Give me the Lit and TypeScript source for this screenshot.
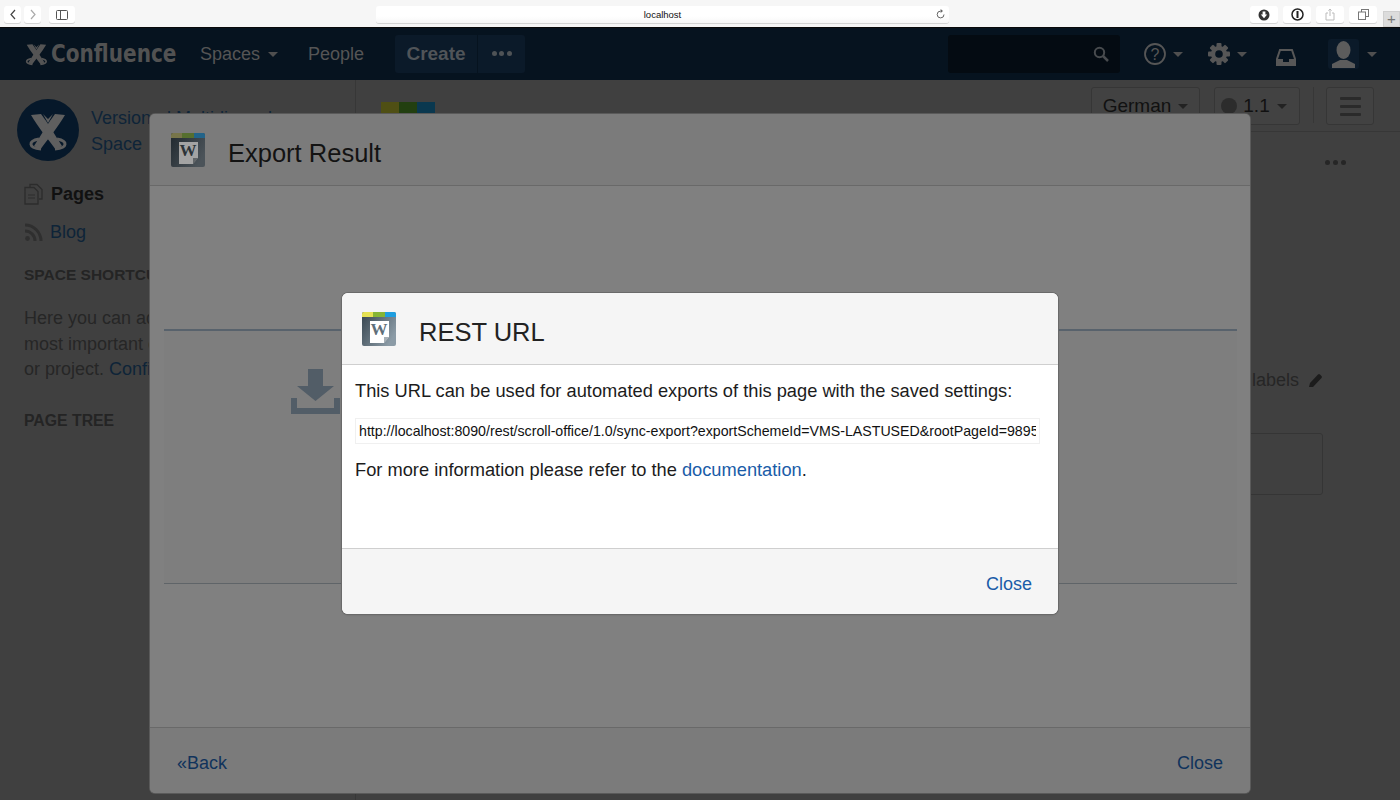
import { LitElement, html, css, svg } from "lit";
import { customElement } from "lit/decorators.js";

const appIcon = (shade: number) => {
  const c = shade === 0
    ? { y: "#e6e253", g: "#86b535", b: "#1e9ee0", t: "#35434d", u: "#8b9ba6", p: "#ffffff", w: "#5f6f7a", id: "a" }
    : { y: "#77754a", g: "#566f2f", b: "#22648a", t: "#20282e", u: "#4b5359", p: "#a3a3a3", w: "#2c3338", id: "b" };
  return html`<svg class="appicon" viewBox="0 0 34 34" width="34" height="34">
    <defs><linearGradient id="g${c.id}" x1="0" y1="0" x2="1" y2="0.6"><stop offset="0" stop-color=${c.t}/><stop offset="1" stop-color=${c.u}/></linearGradient></defs>
    <rect x="0" y="0" width="34" height="34" rx="2" fill="url(#g${c.id})"/>
    <path d="M0 5V2a2 2 0 0 1 2-2h10v5z" fill=${c.y}/><rect x="11" width="12" height="5" fill=${c.g}/>
    <path d="M23 0h9a2 2 0 0 1 2 2v3H23z" fill=${c.b}/>
    <path d="M8 9h19v16l-5 6H8z" fill=${c.p}/>
    <path d="M22 31v-6h5z" fill=${c.w} opacity=".55"/>
    <text x="17" y="23" text-anchor="middle" font-family="Liberation Serif, serif" font-size="17" font-weight="700" fill=${c.w}>W</text>
  </svg>`;
};

const crossed = (fill: string) => svg`
  <path d="M14 16l10-1c7 9 14 21 21 32l-6 4C31 40 21 28 14 16z" fill=${fill}/>
  <path d="M48 16l-10-1c-7 9-14 21-21 32l6 4c8-11 18-23 25-35z" fill=${fill}/>
  <path d="M26 15l5 5 5-5-5 9z" fill=${fill}/>
  <path d="M22 40c-11 2-11 9 2 10M40 40c11 2 11 9-2 10" fill="none" stroke=${fill} stroke-width="3"/>
`;

@customElement("app-root")
export class AppRoot extends LitElement {
  static styles = css`
    :host { display: block; width: 1400px; height: 800px; overflow: hidden; font-family: "Liberation Sans", Arial, sans-serif; }
    * { box-sizing: border-box; }
    a { text-decoration: none; }
    .chrome { height: 28px; background: #f6f6f6; border-bottom: 1px solid #0a0a0a; display: flex; align-items: flex-start; padding: 6px 0 0 4px; position: relative; }
    .cbtn { height: 17px; background: #fff; border-radius: 3px; box-shadow: 0 1px 0 #d4d4d4; display: flex; align-items: center; justify-content: center; }
    .back { width: 17px; margin-right: 3px; }
    .fwd { width: 17px; }
    .side { width: 26px; margin-left: 8px; }
    .addr { width: 573px; margin-left: 301px; height: 17px; background: linear-gradient(#fff 60%, #f7f7f7); border-radius: 3px; box-shadow: 0 1px 0 #d4d4d4; font-size: 9.5px; color: #111; display: flex; align-items: center; justify-content: center; position: relative; }
    .reload { position: absolute; right: 3px; top: 3px; }
    .tools { display: flex; gap: 5px; margin-left: 301px; }
    .tools .cbtn { width: 28px; }
    .plus { position: absolute; right: 0; top: 11px; width: 17px; height: 16px; background: #dcdcdc; border: 1px solid #cfcfcf; color: #777; font-size: 15px; line-height: 14px; text-align: center; }

    .stage { position: relative; height: 772px; background: #404040; overflow: hidden; }
    .nav { height: 52px; background: #06131f; display: flex; align-items: center; color: #555; padding-left: 23px; font-size: 18px; }
    .brand { display: flex; align-items: center; width: 177px; }
    .brand svg { flex: none; }
    .brand span { display: block; font-family: "DejaVu Sans Condensed", "DejaVu Sans", sans-serif; font-stretch: condensed; font-weight: 700; font-size: 24px; color: #525252; transform: scaleX(0.93); transform-origin: left center; white-space: nowrap; }
    .item { display: flex; align-items: center; }
    .caret { width: 0; height: 0; border: 5px solid transparent; border-top: 5px solid #4f4f4f; border-bottom: 0; margin-left: 8px; }
    .spaces { width: 108px; }
    .people { width: 87px; }
    .create { display: flex; height: 38px; background: #0b1a29; border-radius: 3px; margin-top: -1px; }
    .create b { width: 83px; text-align: center; line-height: 38px; font-size: 19px; border-right: 1px solid #06131f; color: #505458; }
    .create i { width: 47px; display: flex; align-items: center; justify-content: center; gap: 2.5px; }
    .create i u { width: 5px; height: 5px; border-radius: 50%; background: #4f5356; display: block; }
    .search { margin-left: 423px; width: 172px; height: 38px; background: #040b12; border-radius: 3px; display: flex; align-items: center; justify-content: flex-end; padding-right: 11px; margin-top: -1px; }
    .nicons { display: flex; align-items: center; margin-left: 23px; }
    .nicons .caret { margin-left: 6px; }
    .gear { margin-left: 24px; }
    .tray { margin: 6px 0 0 28px; }
    .avatar { width: 31px; height: 30px; background: #0b1a29; border-radius: 3px; overflow: hidden; margin-left: 31px; }
    .nicons .last { margin-left: 8px; }

    .body { display: flex; height: 720px; }
    .sidebar { width: 356px; border-right: 1px solid #373737; padding: 19px 0 0 24px; flex: none; color: #262626; font-size: 18px; overflow: hidden; }
    .space { display: flex; align-items: flex-start; margin-left: -7px; height: 62px; white-space: nowrap; }
    .space svg { flex: none; }
    .space div { margin: 6px 0 0 12px; line-height: 26px; color: #0e2438; }
    .nl { display: flex; align-items: center; height: 38px; gap: 8px; }
    .first { margin-top: 14px; }
    .nl b { color: #111; }
    .nl a { color: #0e2438; margin-left: -1px; }
    h4 { margin: 0; font-size: 15.5px; color: #242424; line-height: 20px; white-space: nowrap; }
    .sc { margin-top: 14px; }
    .sidebar p { margin: 21px 0 0; line-height: 25.6px; white-space: nowrap; color: #262626; }
    .sidebar p a { color: #0e2438; }
    .pt { margin-top: 28px; font-size: 15.8px; }

    .main { flex: 1; position: relative; display: flex; flex-direction: column; padding: 0 26px 0 25px; }
    .toolbar { height: 52px; border-bottom: 1px solid #373737; margin: 0 -26px 0 -25px; padding: 7px 26px 0 25px; display: flex; align-items: flex-start; flex: none; }
    .mark { display: flex; margin-top: 15px; height: 12px; width: 54px; }
    .mark u { flex: 1; display: block; }
    .spacer { flex: 1; }
    .tb { height: 38px; border: 1px solid #363636; border-radius: 3px; display: flex; align-items: center; justify-content: center; color: #111; font-size: 19px; background: #424242; }
    .tb .caret { border-top-color: #222; margin-left: 7px; }
    .lang { width: 109px; }
    .ver { width: 86px; margin-left: 14px; padding-right: 6px; }
    .dot { width: 16px; height: 16px; border-radius: 50%; background: #2c2c2c; margin-right: 6px; }
    .sep { width: 1px; height: 36px; background: #373737; margin: 0 12px 0 13px; }
    .menu { width: 48px; flex-direction: column; gap: 5px; }
    .menu u { display: block; width: 21px; height: 3px; background: #2a2a2a; border-radius: 1px; }
    .dots { align-self: flex-end; display: flex; gap: 3px; margin: 28px 28px 0 0; }
    .dots u { width: 5px; height: 5px; border-radius: 50%; background: #262626; display: block; }
    .labels { align-self: flex-end; margin: 202px 51px 0 0; font-size: 18px; color: #262626; display: flex; align-items: center; gap: 9px; line-height: 26px; }
    .box { align-self: flex-end; width: 400px; height: 62px; border: 1px solid #353535; border-radius: 3px; margin: 40px 51px 0 0; }

    .dialog { position: absolute; display: flex; flex-direction: column; border-radius: 5px; overflow: hidden; }
    .d1 { left: 150px; top: 86px; width: 1100px; height: 679px; background: #808080; box-shadow: 0 0 0 1px #5a5a5a; }
    .d2 { left: 342px; top: 265px; width: 716px; height: 321px; background: #fff; box-shadow: 0 0 0 1px #6a6a6a, 0 1px 2px #666; border-radius: 6px; }
    .dh { display: flex; align-items: center; flex: none; }
    .appicon { margin-top: 1px; flex: none; }
    .d1 .dh { height: 72px; background: #7b7b7b; border-bottom: 1px solid #696969; padding: 0 0 0 21px; }
    .d2 .dh { height: 72px; background: #f5f5f5; border-bottom: 1px solid #cfcfcf; padding: 0 0 0 20px; }
    .dh h2 { margin: 8px 0 0 23px; font-weight: 400; font-size: 25.5px; }
    .d1 h2 { color: #131313; }
    .d2 h2 { color: #222; }
    .d1 .dc { flex: 1; padding: 143px 13px 0 14px; }
    .panel { height: 255px; border-top: 2px solid #58626c; border-bottom: 1px solid #5f6468; background: #7e7e7e; padding: 38px 0 0 127px; }
    .df { flex: none; display: flex; justify-content: space-between; align-items: center; }
    .d1 .df { height: 66px; background: #7b7b7b; border-top: 1px solid #696969; padding: 6px 27px 0; font-size: 18px; }
    .d1 .df a { color: #10335c; }
    .d2 .dc { flex: 1; padding: 14px 18px 0 13px; font-size: 18.28px; color: #1c1c1c; line-height: 24px; }
    .dc p { margin: 0; }
    .url { display: block; width: 685px; height: 26px; margin: 15px 0 14px; border: 1px solid #f0f0f0; padding: 0 3px; font-family: "Liberation Sans", Arial, sans-serif; font-size: 14.2px; color: #111; background: #fff; outline: none; }
    .dc a { color: #1a5ca8; }
    .d2 .df { height: 66px; background: #f5f5f5; border-top: 1px solid #cfcfcf; justify-content: flex-end; padding: 6px 26px 0 0; font-size: 18px; }
    .d2 .df a { color: #1a5ca8; }
  `;

  render() {
    return html`
      <div class="chrome">
        <div class="cbtn back"><svg width="8" height="11" viewBox="0 0 8 11"><path d="M6 1 2 5.500 6 10" fill="none" stroke="#444" stroke-width="1.2"/></svg></div>
        <div class="cbtn fwd"><svg width="8" height="11" viewBox="0 0 8 11"><path d="M2 1l4 4.500L2 10" fill="none" stroke="#aaa" stroke-width="1.2"/></svg></div>
        <div class="cbtn side"><svg width="12" height="10" viewBox="0 0 12 10"><rect x=".5" y=".5" width="11" height="9" rx="1" fill="none" stroke="#555"/><path d="M4.500 0v10" stroke="#555"/></svg></div>
        <div class="addr">localhost
          <svg class="reload" width="10" height="11" viewBox="0 0 10 11"><path d="M8 5.500a3.400 3.400 0 1 1-3.400-3.400" fill="none" stroke="#666" stroke-width="1"/><path d="M4.600 0 7 2.100 4.600 4z" fill="#666"/></svg>
        </div>
        <div class="tools">
          <div class="cbtn"><svg width="12" height="12" viewBox="0 0 12 12"><circle cx="6" cy="6" r="5.500" fill="#333"/><path d="M4.600 2.500h2.800v3h1.800L6 9.300 2.800 5.500h1.800z" fill="#fff"/></svg></div>
          <div class="cbtn"><svg width="13" height="13" viewBox="0 0 13 13"><circle cx="6.500" cy="6.500" r="5.500" fill="none" stroke="#222" stroke-width="1.500"/><rect x="5.500" y="3" width="2" height="7" fill="#222"/></svg></div>
          <div class="cbtn"><svg width="10" height="13" viewBox="0 0 10 13"><path d="M3 5H1v7h8V5H7M5 8V1M3.400 2.600 5 1l1.600 1.600" fill="none" stroke="#bbb"/></svg></div>
          <div class="cbtn"><svg width="11" height="11" viewBox="0 0 11 11"><rect x="3.500" y=".5" width="7" height="7" fill="none" stroke="#777"/><rect x=".5" y="3" width="7" height="7.500" fill="#fff" stroke="#777"/></svg></div>
        </div>
        <div class="plus">+</div>
      </div>

      <div class="stage">
        <div class="nav">
          <div class="brand">
            <svg width="28" height="24" viewBox="9 11 46 42">${crossed("#545454")}</svg>
            <span>Confluence</span>
          </div>
          <div class="item spaces">Spaces<i class="caret"></i></div>
          <div class="item people">People</div>
          <div class="create"><b>Create</b><i><u></u><u></u><u></u></i></div>
          <div class="search"><svg width="16" height="16" viewBox="0 0 16 16"><circle cx="6.500" cy="6.500" r="4.700" fill="none" stroke="#484b4e" stroke-width="2"/><path d="M10 10l5 5" stroke="#484b4e" stroke-width="2.500"/></svg></div>
          <div class="nicons">
            <svg width="24" height="24" viewBox="0 0 24 24"><circle cx="12" cy="12" r="10" fill="none" stroke="#565656" stroke-width="1.800"/><text x="12" y="18" text-anchor="middle" font-size="16" font-family="Liberation Sans, sans-serif" fill="#565656">?</text></svg>
            <i class="caret"></i>
            <svg class="gear" width="24" height="24" viewBox="0 0 24 24">
              <g fill="#565656">${[0,45,90,135].map(a => svg`<rect x="9.500" y="1" width="5" height="22" rx="1" transform="rotate(${a} 12 12)"/>`)}<circle cx="12" cy="12" r="8"/></g>
              <circle cx="12" cy="12" r="3.800" fill="#06131f"/>
            </svg>
            <i class="caret"></i>
            <svg class="tray" width="22" height="20" viewBox="0 0 22 20"><path d="M5 3h12l3 9v6H2v-6z" fill="none" stroke="#575757" stroke-width="2"/><path d="M2 12h6v3h6v-3h6v6H2z" fill="#575757"/></svg>
            <div class="avatar"><svg width="31" height="30" viewBox="0 0 31 30"><ellipse cx="15.500" cy="11" rx="7" ry="9" fill="#5c5c5c"/><path d="M4 29v-4l8-4h7l8 4v4z" fill="#5c5c5c"/></svg></div>
            <i class="caret last"></i>
          </div>
        </div>

        <div class="body">
          <div class="sidebar">
            <div class="space">
              <svg width="62" height="62" viewBox="0 0 62 62"><circle cx="31" cy="31" r="31" fill="#06182a"/>${crossed("#5f5f5f")}</svg>
              <div>Versioned Multi-lingual<br>Space</div>
            </div>
            <div class="nl first">
              <svg width="19" height="22" viewBox="0 0 19 22"><path d="M6 4V1.500h7l5 5V16h-3" fill="none" stroke="#2c2c2c" stroke-width="1.300"/><path d="M1 4.500h9l4 4V21H1z" fill="none" stroke="#2c2c2c" stroke-width="1.300"/><path d="M4 12h7M4 15h7" stroke="#2c2c2c" stroke-width="1.200"/></svg>
              <b>Pages</b>
            </div>
            <div class="nl">
              <svg width="19" height="19" viewBox="0 0 19 19"><circle cx="3.500" cy="15.500" r="2.400" fill="#2f2f2f"/><path d="M1 8a10 10 0 0 1 10 10M1 2a16 16 0 0 1 16 16" fill="none" stroke="#2f2f2f" stroke-width="3"/></svg>
              <a>Blog</a>
            </div>
            <h4 class="sc">SPACE SHORTCUTS</h4>
            <p>Here you can add shortcuts to the<br>most important content for your team<br>or project. <a>Configure</a></p>
            <h4 class="pt">PAGE TREE</h4>
          </div>
          <div class="main">
            <div class="toolbar">
              <div class="mark"><u style="background:#4f4f14"></u><u style="background:#223f10"></u><u style="background:#0a384f"></u></div>
              <div class="spacer"></div>
              <div class="tb lang">German<i class="caret"></i></div>
              <div class="tb ver"><i class="dot"></i>1.1<i class="caret"></i></div>
              <div class="sep"></div>
              <div class="tb menu"><u></u><u></u><u></u></div>
            </div>
            <div class="dots"><u></u><u></u><u></u></div>
            <div class="labels">labels
              <svg width="15" height="15" viewBox="0 0 15 15"><path d="M1 14l1-4 8-8.500a1.400 1.400 0 0 1 2 0l1.500 1.500a1.400 1.400 0 0 1 0 2L5 14z" fill="#1c1c1c"/></svg>
            </div>
            <div class="box"></div>
          </div>
        </div>

        <div class="dialog d1">
          <div class="dh">${appIcon(1)}<h2>Export Result</h2></div>
          <div class="dc">
            <div class="panel">
              <svg width="49" height="45" viewBox="0 0 49 45"><path d="M17 0h15v17h11L24.500 32 6 17h11z" fill="#525d67"/><path d="M0 29h6v10h37V29h6v16H0z" fill="#525d67"/></svg>
            </div>
          </div>
          <div class="df"><a>«Back</a><a>Close</a></div>
        </div>

        <div class="dialog d2">
          <div class="dh">${appIcon(0)}<h2>REST URL</h2></div>
          <div class="dc">
            <p>This URL can be used for automated exports of this page with the saved settings:</p>
            <input class="url" readonly value="http://localhost:8090/rest/scroll-office/1.0/sync-export?exportSchemeId=VMS-LASTUSED&rootPageId=98959372" />
            <p>For more information please refer to the <a>documentation</a>.</p>
          </div>
          <div class="df"><a>Close</a></div>
        </div>
      </div>
    `;
  }
}
